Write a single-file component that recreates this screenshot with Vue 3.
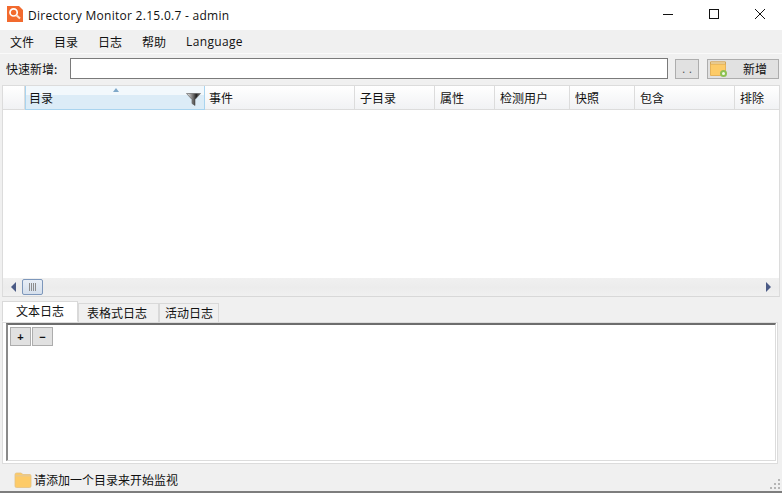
<script setup>
const menus = ['文件', '目录', '日志', '帮助', 'Language']
const cols = ['事件', '子目录', '属性', '检测用户', '快照', '包含', '排除']
const tabs = ['文本日志', '表格式日志', '活动日志']
</script>

<template>
  <div class="win">
    <header class="title">
      <svg class="logo" width="16" height="16" viewBox="0 0 16 16">
        <path d="M0 0H12L16 4V16H0Z" fill="#f26a2e" />
        <circle cx="6.6" cy="6.4" r="3.6" fill="none" stroke="#fff" stroke-width="1.7" />
        <path d="M9.4 9.2L13 12.6" stroke="#fde3d5" stroke-width="2" />
      </svg>
      <span class="title-text">Directory Monitor 2.15.0.7 - admin</span>
      <div class="caps">
        <svg width="12" height="12" viewBox="0 0 12 12"><path d="M1 6.5H11" stroke="#111" /></svg>
        <svg width="12" height="12" viewBox="0 0 12 12"><rect x="1.5" y="1.5" width="9" height="9" fill="none" stroke="#111" /></svg>
        <svg width="12" height="12" viewBox="0 0 12 12"><path d="M1 1L11 11M11 1L1 11" stroke="#111" /></svg>
      </div>
    </header>

    <nav class="menu">
      <span v-for="m in menus" :key="m" class="menu-item">{{ m }}</span>
    </nav>

    <div class="quick">
      <label class="quick-label">快速新增:</label>
      <div class="quick-input"></div>
      <button class="dots">. .</button>
      <button class="add">
        <svg width="18" height="16" viewBox="0 0 18 16">
          <path d="M0.5 1H15.5V14.5H0.5Z" fill="#fdcb68" stroke="#e6b35a" />
          <path d="M0.5 1H15.5V3H0.5Z" fill="#f7e3b4" stroke="#c99a4a" stroke-width="0.7" />
          <circle cx="13.5" cy="12.5" r="3.5" fill="#8cc152" />
          <circle cx="13.5" cy="12.5" r="1.5" fill="#f2f8e8" />
        </svg>
        <span>新增</span>
      </button>
    </div>

    <section class="table">
      <div class="thead">
        <div class="th corner"></div>
        <div class="th sorted">
          <span class="sort"></span>
          目录
          <svg class="filter" width="15" height="13" viewBox="0 0 15 13">
            <defs>
              <linearGradient id="fg" x1="0" x2="1" y1="0" y2="0">
                <stop offset="0" stop-color="#f2f2f2" />
                <stop offset="0.5" stop-color="#666" />
                <stop offset="0.7" stop-color="#222" />
                <stop offset="1" stop-color="#888" />
              </linearGradient>
            </defs>
            <path d="M0.5 0.5H14.5L9 6.5V12.5L6 10.5V6.5Z" fill="url(#fg)" stroke="#555" stroke-width="0.6" />
          </svg>
        </div>
        <div v-for="c in cols" :key="c" class="th">{{ c }}</div>
      </div>
      <div class="tbody"></div>
      <div class="hscroll">
        <span class="arrow left"></span>
        <span class="thumb"><i></i><i></i><i></i><i></i></span>
        <span class="spacer"></span>
        <span class="arrow right"></span>
      </div>
    </section>

    <div class="tabs">
      <span v-for="(t, i) in tabs" :key="t" class="tab" :class="{ active: i === 0 }">{{ t }}</span>
    </div>

    <section class="log">
      <div class="log-inner">
        <div class="log-tools">
          <button class="mini">+</button>
          <button class="mini">−</button>
        </div>
      </div>
    </section>

    <footer class="status">
      <svg width="18" height="16" viewBox="0 0 18 16">
        <path d="M1 2.5Q1 1 2.5 1H7L9 2.5H16Q17 2.5 17 4V14Q17 15.5 15.5 15.5H2.5Q1 15.5 1 14Z" fill="#fdcb68" stroke="#e3c183" stroke-width="0.8" />
        <path d="M1.5 3H16.5V4.5H1.5Z" fill="#e8c98e" />
      </svg>
      <span>请添加一个目录来开始监视</span>
      <div class="grip"><i v-for="n in 6" :key="n"></i></div>
    </footer>
  </div>
</template>

<style>
html, body { margin: 0; background: #f0f0f0; overflow: hidden; }
</style>

<style scoped>
.win {
  width: 782px;
  height: 493px;
  display: flex;
  flex-direction: column;
  background: #f0f0f0;
  color: #111;
  font-family: "Noto Sans CJK SC", "Open Sans", sans-serif;
  font-size: 12px;
  box-sizing: border-box;
  border-bottom: 2px solid #7d7d7d;
  overflow: hidden;
}
.title {
  height: 30px;
  flex: none;
  background: #fff;
  display: flex;
  align-items: center;
  padding-left: 7px;
}
.logo { margin-top: -2px; }
.title-text {
  margin-left: 5px;
  font-family: "Open Sans", sans-serif;
  font-size: 12px;
  letter-spacing: 0.28px;
}
.caps {
  margin-left: auto;
  display: flex;
  gap: 34px;
  padding: 0 16px 2px 0;
}
.menu {
  height: 23px;
  flex: none;
  display: flex;
  align-items: center;
  padding-left: 10px;
  gap: 20px;
  border-bottom: 1px solid #fafafa;
}
.menu-item { line-height: 23px; }
.menu-item:last-child { font-family: "Open Sans", sans-serif; letter-spacing: 0.35px; }
.quick {
  height: 31px;
  flex: none;
  display: flex;
  align-items: center;
  padding-left: 6px;
  box-sizing: border-box;
  padding-bottom: 2px;
}
.quick-label { width: 64px; flex: none; }
.quick-input {
  width: 598px;
  height: 21px;
  box-sizing: border-box;
  background: #fff;
  border: 1px solid #7a7a7a;
}
.dots, .add {
  height: 20px;
  box-sizing: border-box;
  border: 1px solid #adadad;
  background: #e1e1e1;
  padding: 0;
  font: inherit;
  color: #111;
}
.dots {
  width: 24px;
  margin-left: 7px;
  line-height: 12px;
  color: #555;
  font-family: "Liberation Sans", sans-serif;
}
.add {
  width: 72px;
  margin-left: 8px;
  display: flex;
  align-items: center;
  padding-left: 2px;
  box-sizing: border-box;
}
.add span { margin-left: 15px; }
.table {
  margin: 0 2px;
  height: 211px;
  flex: none;
  display: flex;
  flex-direction: column;
  background: #fff;
  border-right: 1px solid #dcdcdc;
  border-bottom: 1px solid #d8d8d8;
  border-left: 1px solid #dcdcdc;
}
.thead {
  height: 25px;
  flex: none;
  display: grid;
  grid-template-columns: 22px 180px 150px 80px 60px 75px 65px 100px 1fr;
  background: linear-gradient(#fff, #f1f2f4);
  border-top: 1px solid #dcdcdc;
  border-bottom: 1px solid #dcdcdc;
  box-sizing: border-box;
}
.th {
  display: flex;
  align-items: center;
  padding: 0 0 0 5px;
  border-right: 1px solid #dcdcdc;
  position: relative;
  box-sizing: border-box;
  min-width: 0;
}
.th:last-child { border-right: 0; }
.th:nth-child(3) { padding-left: 4px; }
.corner { padding: 0; }
.sorted {
  padding-left: 3px;
  background: linear-gradient(#f2f8fc 0 40%, #dcecf7 40%);
  border-left: 1px solid #a9d4ef;
  border-right: 1px solid #a9d4ef;
  border-bottom: 1px solid #a9d4ef;
  margin-bottom: -1px;
}
.sort {
  position: absolute;
  left: 87px;
  top: 2px;
  border-left: 3px solid transparent;
  border-right: 3px solid transparent;
  border-bottom: 4px solid #7fa8c9;
}
.filter { position: absolute; right: 3px; top: 7px; }
.tbody { flex: 1; background: #fff; }
.hscroll {
  height: 18px;
  flex: none;
  display: flex;
  align-items: center;
  background: linear-gradient(#f0f0f0, #ececec 50%, #f0f0f0);
  padding: 0 8px 0 8px;
  box-sizing: border-box;
}
.arrow {
  width: 0;
  height: 0;
  border-top: 5px solid transparent;
  border-bottom: 5px solid transparent;
}
.arrow.left { border-right: 5px solid #4a5a85; }
.arrow.right { border-left: 5px solid #4a5a85; }
.thumb {
  width: 21px;
  height: 16px;
  box-sizing: border-box;
  margin-left: 6px;
  border: 1px solid #7d97bb;
  border-radius: 2px;
  background: linear-gradient(#e8eef6, #d5dfec);
  display: flex;
  justify-content: center;
  align-items: center;
  gap: 1px;
}
.thumb i { width: 1px; height: 8px; background: #8d8d8d; }
.spacer { flex: 1; }
.tabs {
  height: 21px;
  flex: none;
  margin: 4px 0 0 2px;
  display: flex;
  align-items: flex-end;
}
.tab {
  height: 19px;
  box-sizing: border-box;
  border: 1px solid #d9d9d9;
  border-bottom: 0;
  background: #f0f0f0;
  line-height: 18px;
  padding: 0 5px;
  position: relative;
}
.tab:nth-child(2) { padding: 0 11px 0 8px; }
.tab.active {
  height: 21px;
  width: 76px;
  text-align: center;
  background: #fff;
  border-bottom: 1px solid #fff;
  line-height: 17px;
  padding: 0;
  z-index: 1;
}
.log {
  height: 142px;
  flex: none;
  margin: 0 4px 0 2px;
  background: #fff;
  border: 1px solid #dcdcdc;
  padding: 0 1px 2px 3px;
  box-sizing: border-box;
}
.log-inner {
  height: 100%;
  box-sizing: border-box;
  border-top: 2px solid #6d6d6d;
  border-left: 2px solid #8a8a8a;
  border-right: 1px solid #dcdcdc;
  border-bottom: 1px solid #dcdcdc;
  padding: 2px;
  background: #fff;
}
.log-tools { display: flex; gap: 1px; }
.mini {
  width: 21px;
  height: 19px;
  box-sizing: border-box;
  padding: 0;
  background: #e1e1e1;
  border: 1px solid #adadad;
  color: #111;
  font: 600 11px "Liberation Sans", sans-serif;
}
.status {
  flex: 1;
  display: flex;
  align-items: center;
  padding: 4px 0 0 14px;
  position: relative;
}
.status span { margin-left: 2px; }
.grip {
  position: absolute;
  right: 2px;
  bottom: 2px;
  width: 11px;
  height: 11px;
}
.grip i {
  position: absolute;
  width: 2px;
  height: 2px;
  background: #b5b5b5;
}
.grip i:nth-child(1) { right: 0; bottom: 0; }
.grip i:nth-child(2) { right: 4px; bottom: 0; }
.grip i:nth-child(3) { right: 8px; bottom: 0; }
.grip i:nth-child(4) { right: 0; bottom: 4px; }
.grip i:nth-child(5) { right: 4px; bottom: 4px; }
.grip i:nth-child(6) { right: 0; bottom: 8px; }
</style>
